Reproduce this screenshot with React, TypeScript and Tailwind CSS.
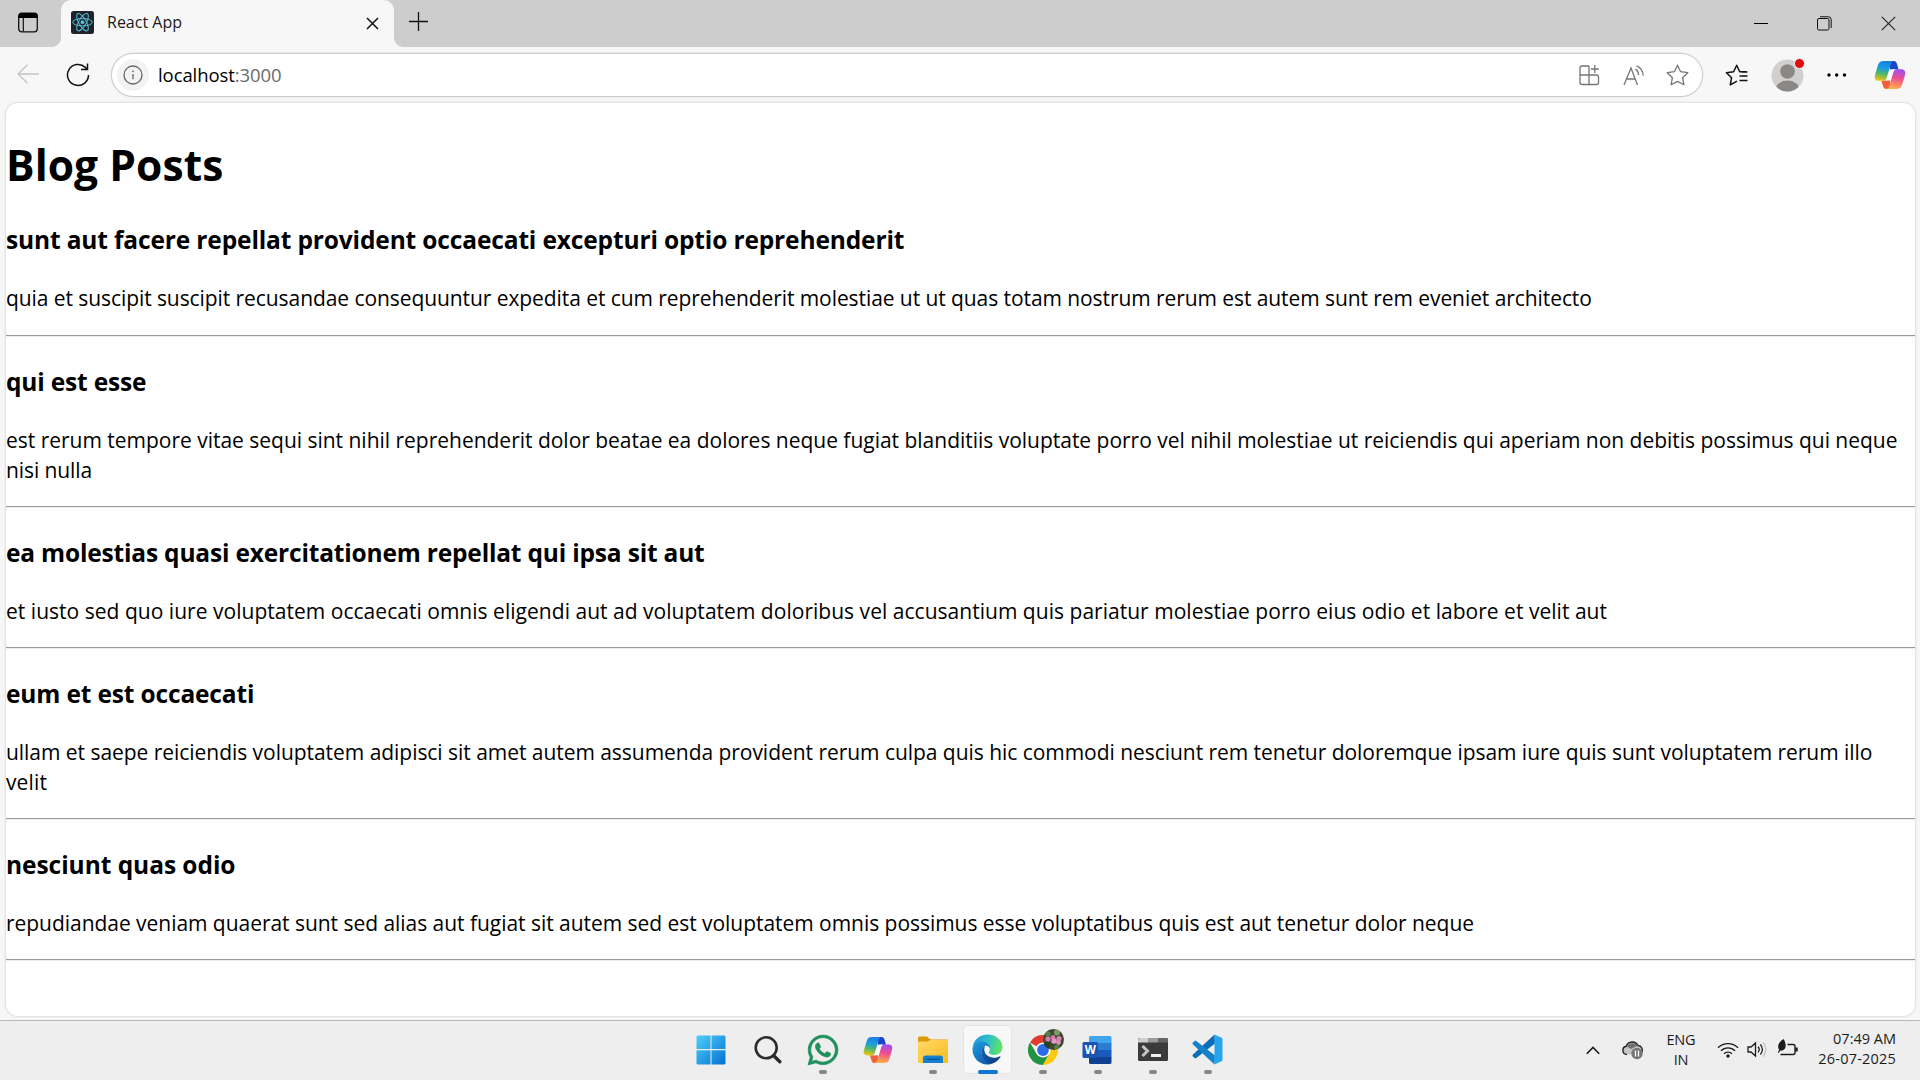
import React from "react";
import { FaWhatsapp } from "react-icons/fa";

type Line = { text: string; track: string };
type Post = { title: Line; body: Line[] };

const posts: Post[] = [
  {
    title: { text: "sunt aut facere repellat provident occaecati excepturi optio reprehenderit", track: "tracking-[-0.14px]" },
    body: [{ text: "quia et suscipit suscipit recusandae consequuntur expedita et cum reprehenderit molestiae ut ut quas totam nostrum rerum est autem sunt rem eveniet architecto", track: "tracking-[-0.076px]" }],
  },
  {
    title: { text: "qui est esse", track: "tracking-[-0.18px]" },
    body: [
      { text: "est rerum tempore vitae sequi sint nihil reprehenderit dolor beatae ea dolores neque fugiat blanditiis voluptate porro vel nihil molestiae ut reiciendis qui aperiam non debitis possimus qui neque", track: "tracking-[-0.017px]" },
      { text: "nisi nulla", track: "tracking-[-0.09px]" },
    ],
  },
  {
    title: { text: "ea molestias quasi exercitationem repellat qui ipsa sit aut", track: "tracking-[-0.18px]" },
    body: [{ text: "et iusto sed quo iure voluptatem occaecati omnis eligendi aut ad voluptatem doloribus vel accusantium quis pariatur molestiae porro eius odio et labore et velit aut", track: "tracking-[0.027px]" }],
  },
  {
    title: { text: "eum et est occaecati", track: "tracking-[-0.15px]" },
    body: [
      { text: "ullam et saepe reiciendis voluptatem adipisci sit amet autem assumenda provident rerum culpa quis hic commodi nesciunt rem tenetur doloremque ipsam iure quis sunt voluptatem rerum illo", track: "tracking-[-0.041px]" },
      { text: "velit", track: "tracking-[0.13px]" },
    ],
  },
  {
    title: { text: "nesciunt quas odio", track: "tracking-[-0.045px]" },
    body: [{ text: "repudiandae veniam quaerat sunt sed alias aut fugiat sit autem sed est voluptatem omnis possimus esse voluptatibus quis est aut tenetur dolor neque", track: "tracking-[-0.038px]" }],
  },
];

function CopilotIcon({ id, className }: { id: string; className: string }) {
  return (
    <svg viewBox="0 0 32 30" className={className}>
      <defs>
        <linearGradient id={id + "a"} x1="0.5" y1="0" x2="0.3" y2="1">
          <stop offset="0" stopColor="#1b7fe6" />
          <stop offset="0.35" stopColor="#1a9be0" />
          <stop offset="0.65" stopColor="#52b86a" />
          <stop offset="1" stopColor="#f2c511" />
        </linearGradient>
        <linearGradient id={id + "b"} x1="0.6" y1="0" x2="0.4" y2="1">
          <stop offset="0" stopColor="#a24df0" />
          <stop offset="0.45" stopColor="#ee4f8f" />
          <stop offset="1" stopColor="#ffb347" />
        </linearGradient>
      </defs>
      <path d="M16 1h3.600c2 0 2.800 1 3.400 3l1.600 5.500H19L16 16z" fill="#1747c4" />
      <path d="M16 29h-3.600c-2 0-2.800-1-3.400-3l-1.600-5.500H13L16 14z" fill="#f2603a" />
      <path d="M9.500 1H20c-2 0-2.800 1.500-3.500 4l-3.600 12.200c-.7 2.400-1.800 3.600-4 3.600H4.500C1.500 20.800 0 18.500 1 15L4 5c.9-2.900 2.600-4 5.500-4z" fill={"url(#" + id + "a)"} />
      <path d="M22.500 29H12c2 0 2.800-1.500 3.500-4l3.600-12.200c.7-2.400 1.800-3.600 4-3.600h4.400c3 0 4.500 2.300 3.500 5.800L28 25c-.9 2.900-2.600 4-5.500 4z" fill={"url(#" + id + "b)"} />
      <path d="M17.300 9.200h4.200c-1.200.5-1.900 1.500-2.400 3.200l-2.400 8.200h-5.500c1.200-.5 1.700-1.500 2.200-3.200l1.500-5.200c.5-1.800 1.100-2.700 2.400-3z" fill="#fff" />
    </svg>
  );
}

function TabStrip() {
  return (
    <div className="flex h-[47px] bg-[#cdcdcd]">
      <div className="flex w-[61px] items-center pl-[17px]">
        <svg className="mt-[-2px]" width="22" height="22" viewBox="0 0 22 22" fill="none">
          <rect x="1.700" y="1.200" width="18.600" height="18.600" rx="3" stroke="#111" strokeWidth="1.300" />
          <path d="M1.500 6V4a3 3 0 0 1 3-3h13a3 3 0 0 1 3 3v2z" fill="#000" />
          <path d="M6.300 5.500v14" stroke="#111" strokeWidth="1.200" />
        </svg>
      </div>
      <div className="relative flex w-[333px] items-center rounded-t-[10px] bg-[#f7f7f7] pl-[10px]">
        <svg className="absolute bottom-0 -left-[9px]" width="9" height="9"><path d="M9 0v9H0a9 9 0 0 0 9-9z" fill="#f7f7f7" /></svg>
        <svg className="absolute -right-[9px] bottom-0" width="9" height="9"><path d="M0 0v9h9a9 9 0 0 1-9-9z" fill="#f7f7f7" /></svg>
        <svg className="mt-[-2px]" width="23" height="23" viewBox="0 0 23 23" fill="none" stroke="#53c1de" strokeWidth="1">
          <rect width="23" height="23" rx="2.500" fill="#20232a" stroke="none" />
          <ellipse cx="11.500" cy="11.200" rx="9.800" ry="3.700" />
          <ellipse cx="11.500" cy="11.200" rx="9.800" ry="3.700" transform="rotate(60 11.500 11.200)" />
          <ellipse cx="11.500" cy="11.200" rx="9.800" ry="3.700" transform="rotate(120 11.500 11.200)" />
          <circle cx="11.500" cy="11.200" r="1.900" fill="#53c1de" stroke="none" />
        </svg>
        <span className="ml-[13px] mt-[-3px] text-[16px] whitespace-nowrap text-[#1a1a1a]">React App</span>
        <svg className="mt-[-1px] mr-[15px] ml-auto" width="13" height="13" viewBox="0 0 13 13"><path d="M1 1l11 11M12 1L1 12" stroke="#111" strokeWidth="1.500" /></svg>
      </div>
      <svg className="mt-[12px] ml-[15px]" width="20" height="20" viewBox="0 0 20 20"><path d="M9.500 0v19M0 9.500h19" stroke="#111" strokeWidth="1.300" /></svg>
      <div className="ml-auto flex items-center pr-[24px]">
        <svg width="14" height="14" viewBox="0 0 14 14"><path d="M0 6.500h14" stroke="#000" /></svg>
        <svg className="ml-[49px]" width="15" height="15" viewBox="0 0 15 15" fill="none" stroke="#111">
          <rect x="0.500" y="2.500" width="11.500" height="11.500" rx="1.500" />
          <path d="M3 .8h8.500a2.700 2.700 0 0 1 2.700 2.700V12" />
        </svg>
        <svg className="ml-[49px]" width="15" height="15" viewBox="0 0 15 15"><path d="M.8.8l13.400 13.400M14.200.8L.8 14.200" stroke="#222" strokeWidth="1.100" /></svg>
      </div>
    </div>
  );
}

const STAR = "M11.500 1.200l3.100 6.500 7.200 1-5.200 5 1.300 7.100-6.400-3.400-6.400 3.400 1.300-7.100-5.200-5 7.200-1z";

function Toolbar() {
  return (
    <div className="flex h-[56px] items-center bg-[#f7f7f7]">
      <svg className="ml-[17px] mt-[-2px]" width="22" height="20" viewBox="0 0 22 20" fill="none" stroke="#c4c4c4" strokeWidth="1.300"><path d="M22 10H1M10.500.8L1 10l9.500 9.200" /></svg>
      <svg className="ml-[27px]" width="24" height="24" viewBox="0 0 24 24" fill="none" stroke="#111" strokeWidth="1.500"><path d="M22.500 12A10.500 10.500 0 1 1 19.300 4.400L21 6.200M21.500.5v6H15" /></svg>
      <div className="ml-[21px] flex h-[44px] w-[1592px] items-center rounded-full border border-[#cdcdcd] bg-white shadow-[0_0_0_0.5px_#e2e2e2]">
        <div className="ml-[5px] flex size-[32px] items-center justify-center rounded-full bg-[#f3f3f3]">
          <svg width="20" height="20" viewBox="0 0 20 20" fill="none" stroke="#666" strokeWidth="1.300"><circle cx="10" cy="10" r="9" /><path d="M10 9v5.200" /><circle cx="10" cy="6.300" r="0.900" fill="#666" stroke="none" /></svg>
        </div>
        <span className="ml-[9px] text-[18.500px] leading-[30px] tracking-[-0.084px] whitespace-nowrap text-black">localhost<span className="text-[#6b6b6b]">:3000</span></span>
        <svg className="ml-auto" width="21" height="21" viewBox="0 0 21 21" fill="none" stroke="#767676" strokeWidth="1.300">
          <path d="M10 1H3a2 2 0 0 0-2 2v14.500a2 2 0 0 0 2 2h14.500a2 2 0 0 0 2-2v-5.500a2 2 0 0 0-2-2H1M10 1v18.500M15.800 0v8M11.800 4h8" />
        </svg>
        <svg className="ml-[23px]" width="22" height="21" viewBox="0 0 22 21" fill="none" stroke="#767676" strokeWidth="1.300">
          <path d="M1 20L8 3l6.500 17M3.500 14h9M12.500 4a7 7 0 0 1 3 6M13.500.8a11 11 0 0 1 6.700 10" />
        </svg>
        <svg className="mr-[13px] ml-[21px]" width="23" height="23" viewBox="0 0 23 23" fill="none" stroke="#767676" strokeWidth="1.300" strokeLinejoin="round"><path d={STAR} /></svg>
      </div>
      <svg className="ml-[22px]" width="24" height="23" viewBox="0 0 24 23" fill="none" stroke="#111" strokeWidth="1.500" strokeLinejoin="round">
        <path d="M12 17.200l-6.700 3.600 1.300-7.100-5.200-5 7.200-1 3.100-6.500 3 6.500h6.500M14.500 12h8M14.500 16.500h8M16.500 8h6" />
      </svg>
      <div className="relative ml-[22px] size-[33px]">
        <svg width="33" height="33" viewBox="0 0 33 33">
          <defs><clipPath id="av"><circle cx="16.500" cy="16.500" r="16" /></clipPath></defs>
          <g clipPath="url(#av)">
            <rect width="33" height="33" fill="#d2d0ce" />
            <circle cx="16.500" cy="12.500" r="7.300" fill="#8a8886" />
            <ellipse cx="16.500" cy="30" rx="11.500" ry="8.500" fill="#8a8886" />
          </g>
        </svg>
        <span className="absolute -top-[1px] left-[23px] size-[11px] rounded-full border border-[#f7f7f7] bg-[#e00b0b]" />
      </div>
      <svg className="ml-[23px]" width="20" height="4" viewBox="0 0 20 4"><circle cx="2" cy="2" r="1.700" /><circle cx="9.700" cy="2" r="1.700" /><circle cx="17.500" cy="2" r="1.700" /></svg>
      <CopilotIcon id="cb" className="ml-[27px] h-[30px] w-[32px]" />
    </div>
  );
}

function BlogPage() {
  return (
    <div className="h-[917px] bg-[#f7f7f7] px-[6px]">
      <main className="h-[913px] w-[1909px] overflow-hidden rounded-[12px] bg-white pt-[32px] text-black shadow-[0_0_2px_1px_#dedede]">
        <h1 className="h-[59px] text-[42.500px] leading-[60px] font-bold tracking-[0.08px] whitespace-nowrap">Blog Posts</h1>
        <div className="pt-[2px]">
          {posts.map((p) => (
            <article key={p.title.text} className="group">
              <h3 className="pt-[27px] text-[24.500px] leading-[35px] font-bold group-first:pt-[26px]">
                <span className={"whitespace-nowrap " + p.title.track}>{p.title.text}</span>
              </h3>
              <p className="mt-[26px] text-[21px] leading-[30px]">
                {p.body.map((l) => (
                  <span key={l.text} className={"block whitespace-nowrap " + l.track}>{l.text}</span>
                ))}
              </p>
              <hr className="mt-[21px] h-[2px] border-t border-b border-t-[#9a9a9a] border-b-[#eeeeee] group-first:mt-[22px]" />
            </article>
          ))}
        </div>
      </main>
    </div>
  );
}

function WindowsIcon() {
  return (
    <svg className="mr-[3px]" width="30" height="30" viewBox="0 0 30 30">
      <defs><linearGradient id="wn" gradientUnits="userSpaceOnUse" x1="0" y1="0" x2="29" y2="29"><stop offset="0" stopColor="#50d0fb" /><stop offset="1" stopColor="#0473d3" /></linearGradient></defs>
      <path d="M1.500.5H14.500V14H.500V1.500zM15.500.5H28.500l1 1V14H15.500zM.500 15.300H14.500V29.500H1.500l-1-1zM15.500 15.300H29.500V28.500l-1 1H15.500z" fill="url(#wn)" />
    </svg>
  );
}

function SearchIcon() {
  return (
    <svg width="28" height="28" viewBox="0 0 28 28" fill="none" stroke="#2c2c2c">
      <circle cx="12.200" cy="11.800" r="10.500" strokeWidth="2.600" />
      <path d="M19.800 19.800l6 6" strokeWidth="3.400" strokeLinecap="round" />
    </svg>
  );
}

function FolderIcon() {
  return (
    <svg width="30" height="28" viewBox="0 0 30 28">
      <defs><linearGradient id="fo" x1="0" y1="0" x2="1" y2="1"><stop offset="0" stopColor="#ffd968" /><stop offset="1" stopColor="#fdbb1d" /></linearGradient></defs>
      <path d="M0 2a1.500 1.500 0 0 1 1.500-1.500H9l3.500 3H29a1 1 0 0 1 1 1V9H0z" fill="#dc9a07" />
      <path d="M0 6.500 Q0 5.500 1 5.500H9.500L12.500 4H29.500a.5.5 0 0 1 .5.500V26a1 1 0 0 1-1 1H1a1 1 0 0 1-1-1z" fill="url(#fo)" />
      <path d="M5 27v-5a2.500 2.500 0 0 1 2.500-2.500h15A2.500 2.500 0 0 1 25 22v5z" fill="#1580cf" />
      <path d="M8.500 23.200h13" stroke="#0a4c8c" strokeWidth="1.200" />
    </svg>
  );
}

function EdgeIcon() {
  return (
    <svg width="31" height="31" viewBox="0 0 31 31">
      <defs>
        <linearGradient id="e1" x1="0" y1="0.300" x2="1" y2="0.500"><stop offset="0" stopColor="#2596dc" /><stop offset="0.500" stopColor="#30c0c8" /><stop offset="1" stopColor="#62e560" /></linearGradient>
        <linearGradient id="e2" x1="0" y1="0" x2="0.600" y2="1"><stop offset="0" stopColor="#1ea0e0" /><stop offset="1" stopColor="#0f5eb3" /></linearGradient>
        <linearGradient id="e3" x1="0" y1="0" x2="1" y2="0.600"><stop offset="0" stopColor="#1361b4" /><stop offset="1" stopColor="#0b3f85" /></linearGradient>
      </defs>
      <path d="M.6 13C1.800 5.500 8 .5 15.500.5c9 0 15 6.200 15 12.500 0 5-3.800 8-8.300 8-3.700 0-5.600-1.300-5.600-2.400 0-.8 1.200-1.200 1.200-3.600 0-3.400-3.600-6.300-8.300-6.300C5.300 8.700 2 11 .6 13z" fill="url(#e1)" />
      <path d="M.5 14.500C1.500 10.300 5 7.500 9.500 7.500c4.800 0 8.400 3 8.500 7-1-2.200-3-3-4.500-3-3.500 2.500-4.500 6-3.500 10 1 4 4.500 7 9 8.500-1.200.4-2.300.5-3.500.5C7 30.500 0 23.500.5 14.500z" fill="url(#e2)" />
      <path d="M13 12c-2.800 1.800-4 5-3.300 8.800C10.600 26 15 30 19 30c4-.9 7.300-3.300 9.300-6.700.4-.7-.1-1.200-.8-.8-1.700.9-3.600 1.300-5.500 1.300-5.500 0-9.700-3.700-9.700-8 0-1.300.2-2.600.7-3.800z" fill="url(#e3)" />
    </svg>
  );
}

function ChromeIcon() {
  return (
    <div className="relative size-[30px]">
      <svg width="30" height="30" viewBox="0 0 30 30">
        <path d="M15 15L2 7.500A15 15 0 0 1 28 7.500z" fill="#e33b2e" />
        <path d="M8.500 18.700L2 7.500A15 15 0 0 0 15 30l6.500-11.200z" fill="#229342" />
        <path d="M15 7.500h13A15 15 0 0 1 15 30l6.500-11.200z" fill="#fdc912" />
        <circle cx="15" cy="15" r="7.500" fill="#fff" />
        <circle cx="15" cy="15" r="5.900" fill="#2d6ce8" />
      </svg>
      <svg className="absolute -top-[6px] left-[15px]" width="21" height="21" viewBox="0 0 21 21">
        <defs><clipPath id="fl"><circle cx="10.500" cy="10.500" r="10.500" /></clipPath></defs>
        <g clipPath="url(#fl)">
          <rect width="21" height="21" fill="#3d4a31" />
          <circle cx="14" cy="3.500" r="3" fill="#7d9a68" /><circle cx="5" cy="5" r="2.500" fill="#5c7f46" /><circle cx="4" cy="16" r="3" fill="#24401c" /><circle cx="14" cy="18.500" r="2.800" fill="#567f42" />
          <circle cx="5" cy="10" r="2.600" fill="#d27fae" /><circle cx="10" cy="8.500" r="2.400" fill="#cf78a8" /><circle cx="11" cy="12" r="2.800" fill="#e59ac4" /><circle cx="16" cy="9.500" r="2.600" fill="#d683b0" /><circle cx="15.500" cy="13.500" r="2.400" fill="#dd8fba" /><circle cx="8" cy="11" r="1.100" fill="#8a4a70" />
        </g>
      </svg>
    </div>
  );
}

function WordIcon() {
  return (
    <svg className="mr-px" width="30" height="28" viewBox="0 0 30 28">
      <path d="M8.500 0H28a1.500 1.500 0 0 1 1.500 1.500V7H7V1.500A1.500 1.500 0 0 1 8.500 0z" fill="#41a5ee" />
      <path d="M7 7h22.500v7H7z" fill="#2b7cd3" />
      <path d="M7 14h22.500v7H7z" fill="#185abd" />
      <path d="M7 21h22.500v5.500A1.500 1.500 0 0 1 28 28H8.500A1.500 1.500 0 0 1 7 26.500z" fill="#103f91" />
      <rect x="0.500" y="6" width="15.500" height="16" rx="1.500" fill="#1d53b0" />
      <text x="8.200" y="18" textAnchor="middle" fontFamily="Open Sans, sans-serif" fontWeight="700" fontSize="11.500" fill="#fff">W</text>
    </svg>
  );
}

function TerminalIcon() {
  return (
    <svg width="30" height="23" viewBox="0 0 30 23">
      <rect width="30" height="23" rx="1.500" fill="#3b3b3b" />
      <path d="M1.500 0H10v4.500H0v-3z" fill="#cfcfcf" /><path d="M10 0h10v4.500H10z" fill="#9b9b9b" /><path d="M20 0h8.500A1.500 1.500 0 0 1 30 1.500v3H20z" fill="#666" />
      <path d="M4.500 8l5 5-5 5" fill="none" stroke="#c4c4c4" strokeWidth="3" />
      <path d="M13 17.500h10" stroke="#f0f0f0" strokeWidth="3" />
    </svg>
  );
}

function VSCodeIcon() {
  return (
    <svg width="31" height="31" viewBox="0 0 31 31">
      <path d="M22.500.5L1 20.500c-.7.700-.7 1.400 0 2l1.500 1.400c.6.500 1.200.5 1.800.1L23 9.500z" fill="#0b6db5" />
      <path d="M22.500 30.500L1 10.500c-.7-.7-.7-1.400 0-2l1.500-1.400c.6-.5 1.200-.5 1.800-.1L23 21.500z" fill="#1583cc" />
      <path d="M22.500.5l7 3.200c.7.300 1 .8 1 1.500v20.600c0 .7-.3 1.200-1 1.500l-7 3.200z" fill="#25a5ee" />
    </svg>
  );
}

type TaskApp = { key: string; icon: React.ReactNode; state: "none" | "running" | "active" };
const apps: TaskApp[] = [
  { key: "start", icon: <WindowsIcon />, state: "none" },
  { key: "search", icon: <SearchIcon />, state: "none" },
  { key: "whatsapp", icon: <FaWhatsapp className="size-[34px] overflow-visible stroke-[#1f8f5d] text-[#1f8f5d] [stroke-width:12]" />, state: "running" },
  { key: "copilot", icon: <CopilotIcon id="ct" className="h-[28px] w-[30px]" />, state: "none" },
  { key: "explorer", icon: <FolderIcon />, state: "running" },
  { key: "edge", icon: <EdgeIcon />, state: "active" },
  { key: "chrome", icon: <ChromeIcon />, state: "running" },
  { key: "word", icon: <WordIcon />, state: "running" },
  { key: "terminal", icon: <TerminalIcon />, state: "running" },
  { key: "vscode", icon: <VSCodeIcon />, state: "running" },
];

function Taskbar() {
  return (
    <div className="grid h-[60px] grid-cols-[1fr_550px_1fr] border-t border-[#b9b9b9] bg-[#eeeeee]">
      <div />
      <div className="flex pt-[4px]">
        {apps.map((a) => (
          <div key={a.key} className="flex w-[55px] justify-center">
            <div className={a.state === "active" ? "relative flex size-[49px] items-center justify-center rounded-[5px] border border-[#e4e4e4] bg-[#f8f8f8]" : "relative flex size-[49px] items-center justify-center"}>
              {a.icon}
              {a.state === "running" && <span className="absolute bottom-0 left-[21px] h-[4px] w-[8px] rounded-full bg-[#868686]" />}
              {a.state === "active" && <span className="absolute bottom-[-1px] left-[14px] h-[4px] w-[20px] rounded-full bg-[#0c78d4]" />}
            </div>
          </div>
        ))}
      </div>
      <div className="flex items-center justify-end pr-[24px] pb-[4px] text-[14.500px] leading-[20px] text-[#1c1c1c]">
        <svg className="mt-[3px]" width="14" height="9" viewBox="0 0 14 9" fill="none" stroke="#1c1c1c" strokeWidth="1.600"><path d="M.8 7.800L7 1.500l6.200 6.300" /></svg>
        <svg className="mt-[3px] ml-[22px]" width="22" height="20" viewBox="0 0 22 20">
          <path d="M5 14.500a4.200 4.200 0 0 1-.8-8.300A6.500 6.500 0 0 1 16 5.500a4.500 4.500 0 0 1 3.500 7" fill="#c4c4c4" stroke="#222" strokeWidth="1.400" />
          <path d="M5 6.500A6.500 6.500 0 0 1 15.800 5.600L9 9z" fill="#6f6f6f" />
          <circle cx="15" cy="13.500" r="5.700" fill="#757575" /><path d="M13.500 10.500v6M16.500 10.500v6" stroke="#fff" strokeWidth="1.300" />
        </svg>
        <div className="mt-[3px] ml-[22px] w-[30px] text-center tracking-[-0.16px]">ENG<br />IN</div>
        <svg className="mt-[2px] ml-[21px]" width="22" height="16" viewBox="0 0 22 16" fill="none" stroke="#1c1c1c" strokeWidth="1.400">
          <path d="M1 5.800a14 14 0 0 1 20 0M4 8.800a9.800 9.800 0 0 1 14 0M7 11.800a5.700 5.700 0 0 1 8 0" /><circle cx="11" cy="14" r="1.700" fill="#1c1c1c" stroke="none" />
        </svg>
        <svg className="mt-[2px] ml-[8px]" width="20" height="17" viewBox="0 0 20 17" fill="none" stroke="#1c1c1c" strokeWidth="1.300">
          <path d="M1 6v5h3l4.500 4V2L4 6zM11 5.800a4 4 0 0 1 0 5.400M13.300 3.500a7 7 0 0 1 0 10" /><path d="M16 1.500a10 10 0 0 1 0 14" stroke="#c2c2c2" />
        </svg>
        <svg className="mt-[-1px] ml-[10px]" width="22" height="18" viewBox="0 0 22 18" fill="none" stroke="#1c1c1c" strokeWidth="1.400">
          <path d="M10.500 5.500h5.500a2 2 0 0 1 2 2v6a2 2 0 0 1-2 2H3.500" /><path d="M19.500 8.500v4" strokeWidth="2.400" />
          <path d="M6.500 0C8.500 3 9.500 7 8 9.500c-1 1.500-3 2.500-4.500 2L1.500 14 .8 13l1.500-2C0 8 1 3.500 6.500 0z" fill="#1c1c1c" stroke="none" />
        </svg>
        <div className="ml-[20px] w-[77px] text-right whitespace-nowrap">07:49 AM<br /><span className="-ml-px tracking-[0.2px]">26-07-2025</span></div>
      </div>
    </div>
  );
}

export default function App() {
  return (
    <div className="h-[1080px] w-[1920px] overflow-hidden font-['Open_Sans','Noto_Sans',sans-serif]">
      <TabStrip />
      <Toolbar />
      <BlogPage />
      <Taskbar />
    </div>
  );
}
